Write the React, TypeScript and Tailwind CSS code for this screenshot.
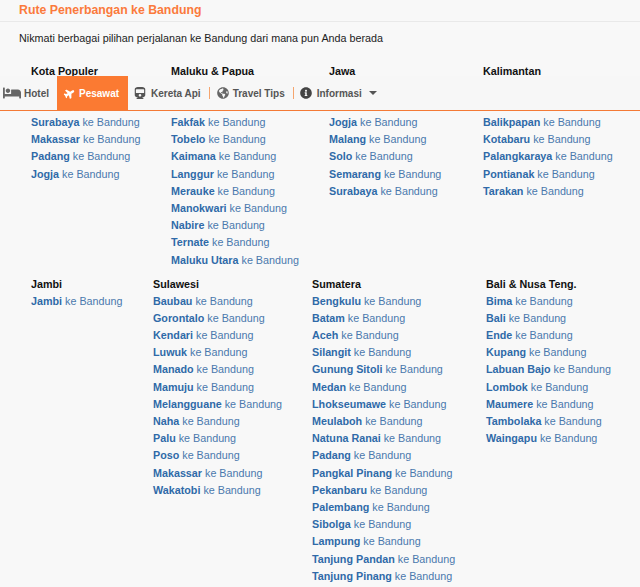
import React from "react";
import { FaBed, FaPlane, FaTrain, FaGlobeAmericas, FaInfoCircle } from "react-icons/fa";

type Group = { title: string; cities: string[]; width: string; hidden?: number };

const row1: Group[] = [
  { title: "Kota Populer", width: "w-[140px]", hidden: 2, cities: ["Surabaya", "Makassar", "Padang", "Jogja"] },
  { title: "Maluku & Papua", width: "w-[158px]", hidden: 2, cities: ["Fakfak", "Tobelo", "Kaimana", "Langgur", "Merauke", "Manokwari", "Nabire", "Ternate", "Maluku Utara"] },
  { title: "Jawa", width: "w-[154px]", hidden: 2, cities: ["Jogja", "Malang", "Solo", "Semarang", "Surabaya"] },
  { title: "Kalimantan", width: "w-[150px]", hidden: 2, cities: ["Balikpapan", "Kotabaru", "Palangkaraya", "Pontianak", "Tarakan"] },
];
const row2: Group[] = [
  { title: "Jambi", width: "w-[122px]", cities: ["Jambi"] },
  { title: "Sulawesi", width: "w-[159px]", cities: ["Baubau", "Gorontalo", "Kendari", "Luwuk", "Manado", "Mamuju", "Melangguane", "Naha", "Palu", "Poso", "Makassar", "Wakatobi"] },
  { title: "Sumatera", width: "w-[174px]", cities: ["Bengkulu", "Batam", "Aceh", "Silangit", "Gunung Sitoli", "Medan", "Lhokseumawe", "Meulaboh", "Natuna Ranai", "Padang", "Pangkal Pinang", "Pekanbaru", "Palembang", "Sibolga", "Lampung", "Tanjung Pandan", "Tanjung Pinang"] },
  { title: "Bali & Nusa Teng.", width: "w-[150px]", cities: ["Bima", "Bali", "Ende", "Kupang", "Labuan Bajo", "Lombok", "Maumere", "Tambolaka", "Waingapu"] },
];

function Col({ g }: { g: Group }) {
  return (
    <div className={`${g.width} shrink-0`}>
      <div className="h-[17px] leading-[17px] font-bold text-[#111]">{g.title}</div>
      {g.hidden ? <div className="h-[34px]" /> : null}
      {g.cities.map((c, i) => (
        <div key={i} className="h-[17.2px] leading-[17.2px] text-[#4a78ad]">
          <b className="text-[#2f6aa8]">{c}</b> ke Bandung
        </div>
      ))}
    </div>
  );
}

function Sep() {
  return <span className="w-px h-[12px] bg-[#f5a56e]" />;
}

export default function App() {
  return (
    <div className="relative w-[640px] h-[587px] overflow-hidden bg-[#f8f8f8] text-[10.75px] font-['Liberation_Sans',Arial,sans-serif]">
      <div className="h-[22px] border-b border-[#e9e9e9] pl-[19px] pt-[2px] text-[12.3px] leading-[16px] font-bold text-[#fb7a3c]">
        Rute Penerbangan ke Bandung
      </div>
      <p className="pl-[19px] pt-[10px] leading-[13px] text-[#222]">
        Nikmati berbagai pilihan perjalanan ke Bandung dari mana pun Anda berada
      </p>
      <div className="flex pl-[31px] pt-[18px]">
        {row1.map((g) => <Col key={g.title} g={g} />)}
      </div>
      <div className="flex pl-[31px] pt-[7px]">
        {row2.map((g) => <Col key={g.title} g={g} />)}
      </div>

      <nav className="absolute left-0 right-0 top-[76px] h-[35px] flex items-center border-b border-[#f47a36] bg-[#f7f7f7] text-[#555] font-bold text-[10px]">
        <span className="flex items-center gap-[3px] w-[57px] pl-[3px]">
          <FaBed size={18} className="text-[#666]" />Hotel
        </span>
        <span className="flex items-center gap-[4px] h-[34px] w-[71px] pl-[7px] bg-[#fb7a32] text-white">
          <FaPlane size={11} className="-rotate-[30deg]" />Pesawat
        </span>
        <span className="flex items-center gap-[5px] pl-[6px] pr-[8px]">
          <FaTrain size={12} className="text-[#555]" />Kereta Api
        </span>
        <Sep />
        <span className="flex items-center gap-[4px] pl-[7px] pr-[8px]">
          <FaGlobeAmericas size={12} className="text-[#666]" />Travel Tips
        </span>
        <Sep />
        <span className="flex items-center gap-[5px] pl-[6px]">
          <FaInfoCircle size={12} className="text-[#444]" />Informasi
          <span className="ml-[2px] w-0 h-0 border-x-[4px] border-x-transparent border-t-[4px] border-t-[#555]" />
        </span>
      </nav>
    </div>
  );
}
